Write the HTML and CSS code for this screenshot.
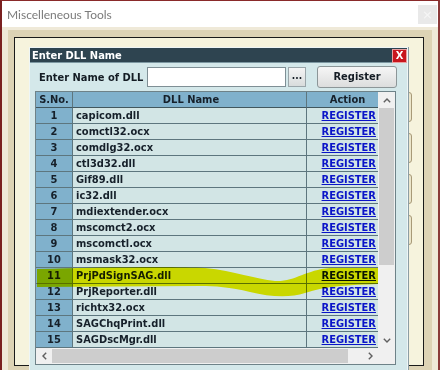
FILE: index.html
```html
<!DOCTYPE html>
<html>
<head>
<meta charset="utf-8">
<link rel="stylesheet" href="styles.css">
</head>
<body>
<div class="window">
  <div class="titlebar">
    <span class="title">Miscelleneous Tools</span>
    <span class="winclose">×</span>
  </div>
  <div class="client">
    <div class="panel">
      <div class="form">
        <div class="sidebtns">
          <div class="sidebtn"></div>
          <div class="sidebtn"></div>
          <div class="sidebtn"></div>
          <div class="sidebtn"></div>
        </div>
      </div>
    </div>
  </div>

  <div class="dialog">
    <div class="dlg-title">
      <span>Enter DLL Name</span>
      <span class="dlg-close">X</span>
    </div>
    <div class="dlg-body">
      <div class="inputrow">
        <span class="label">Enter Name of DLL</span>
        <span class="textbox"></span>
        <span class="browse">...</span>
        <span class="regbtn">Register</span>
      </div>
      <div class="gridbox">
        <div class="gridmain">
          <div class="table">
            <div class="row head"><span class="c sno">S.No.</span><span class="c name">DLL Name</span><span class="c act">Action</span></div>
            <div class="row"><span class="c sno">1</span><span class="c name">capicom.dll</span><span class="c act"><a>REGISTER</a></span></div>
            <div class="row"><span class="c sno">2</span><span class="c name">comctl32.ocx</span><span class="c act"><a>REGISTER</a></span></div>
            <div class="row"><span class="c sno">3</span><span class="c name">comdlg32.ocx</span><span class="c act"><a>REGISTER</a></span></div>
            <div class="row"><span class="c sno">4</span><span class="c name">ctl3d32.dll</span><span class="c act"><a>REGISTER</a></span></div>
            <div class="row"><span class="c sno">5</span><span class="c name">Gif89.dll</span><span class="c act"><a>REGISTER</a></span></div>
            <div class="row"><span class="c sno">6</span><span class="c name">ic32.dll</span><span class="c act"><a>REGISTER</a></span></div>
            <div class="row"><span class="c sno">7</span><span class="c name">mdiextender.ocx</span><span class="c act"><a>REGISTER</a></span></div>
            <div class="row"><span class="c sno">8</span><span class="c name">mscomct2.ocx</span><span class="c act"><a>REGISTER</a></span></div>
            <div class="row"><span class="c sno">9</span><span class="c name">mscomctl.ocx</span><span class="c act"><a>REGISTER</a></span></div>
            <div class="row"><span class="c sno">10</span><span class="c name">msmask32.ocx</span><span class="c act"><a>REGISTER</a></span></div>
            <div class="row"><span class="c sno">11</span><span class="c name">PrjPdSignSAG.dll</span><span class="c act"><a>REGISTER</a></span></div>
            <div class="row"><span class="c sno">12</span><span class="c name">PrjReporter.dll</span><span class="c act"><a>REGISTER</a></span></div>
            <div class="row"><span class="c sno">13</span><span class="c name">richtx32.ocx</span><span class="c act"><a>REGISTER</a></span></div>
            <div class="row"><span class="c sno">14</span><span class="c name">SAGChqPrint.dll</span><span class="c act"><a>REGISTER</a></span></div>
            <div class="row"><span class="c sno">15</span><span class="c name">SAGDscMgr.dll</span><span class="c act"><a>REGISTER</a></span></div>
          </div>
          <div class="vscroll">
            <span class="arrow"><svg width="8" height="5" viewBox="0 0 8 5"><polyline points="0.8,4.2 4,1 7.2,4.2" fill="none" stroke="#606060" stroke-width="1.4"/></svg></span>
            <span class="vthumb"></span>
            <span class="vtrack"></span>
            <span class="arrow"><svg width="8" height="5" viewBox="0 0 8 5"><polyline points="0.8,0.8 4,4 7.2,0.8" fill="none" stroke="#606060" stroke-width="1.4"/></svg></span>
          </div>
        </div>
        <div class="hscroll">
          <span class="harrow"><svg width="5" height="8" viewBox="0 0 5 8"><polyline points="4.2,0.8 1,4 4.2,7.2" fill="none" stroke="#606060" stroke-width="1.4"/></svg></span>
          <span class="hthumb"></span>
          <span class="htrack"></span>
          <span class="harrow"><svg width="5" height="8" viewBox="0 0 5 8"><polyline points="0.8,0.8 4,4 0.8,7.2" fill="none" stroke="#606060" stroke-width="1.4"/></svg></span>
          <span class="corner"></span>
        </div>
      </div>
    </div>
  </div>

  <svg class="marker" width="440" height="370" viewBox="0 0 440 370">
    <path d="M37,269 C100,267 180,266 205,268 C235,271 255,279 275,281 C295,282 305,270 330,268 L378,268 L378,284 C350,285 325,286 305,293 C290,298 270,297 250,292 C230,287 215,286 200,286 L37,287 Z" fill="#f4f000"/>
  </svg>
</div>
</body>
</html>
```

FILE: styles.css
```css
* { box-sizing: border-box; }

html, body {
  margin: 0;
  padding: 0;
  background: #efe9d8;
}

.window {
  position: relative;
  width: 440px;
  height: 370px;
  overflow: hidden;
  background: #efe9d8;
  border-top: 1px solid #8a2a2a;
  border-left: 2px solid #7a2020;
  border-right: 2px solid #8a3a3a;
}

.titlebar {
  height: 26px;
  background: #ffffff;
  display: flex;
  align-items: center;
  justify-content: space-between;
  padding: 0 1px 0 5px;
}

.title {
  font-family: Lato, "Liberation Sans", sans-serif;
  font-size: 12px;
  color: #7b7b7b;
  padding-top: 1px;
}

.winclose {
  width: 19px;
  height: 19px;
  background: #e9e9e9;
  color: #f6f6f6;
  font-family: "DejaVu Sans", sans-serif;
  font-size: 13px;
  line-height: 19px;
  text-align: center;
}

.client {
  padding: 3px 6px 0 6px;
  height: 343px;
}

.panel {
  background: #ddd3b5;
  height: 100%;
  padding: 7px 8px 0 6px;
}

.form {
  height: 329px;
  border: 1px solid #1a1a1a;
  background: #f6f3dd;
  display: flex;
  justify-content: flex-end;
  padding: 54px 11px 0 0;
}

.sidebtns {
  display: flex;
  flex-direction: column;
  gap: 11px;
}

.sidebtn {
  width: 60px;
  height: 30px;
  border: 1px solid #a89a78;
  border-radius: 3px;
  background: #ece6cb;
}

/* Dialog window (floats over the form) */
.dialog {
  position: absolute;
  left: 27px;
  top: 46px;
  width: 379px;
  height: 330px;
  background: #d4e8ea;
  border: 1px solid #eef5f6;
  box-shadow: 1px 0 0 #8c9ea4;
  font-family: "DejaVu Sans Condensed", "DejaVu Sans", sans-serif;
  font-weight: bold;
}

.dlg-title {
  height: 15px;
  background: #2e4450;
  border-bottom: 1px solid #7d98a2;
  color: #ffffff;
  font-size: 11px;
  display: flex;
  align-items: center;
  justify-content: space-between;
  padding-left: 2px;
}

.dlg-close {
  width: 15px;
  height: 14px;
  background: #c8161e;
  border: 1px solid #e9a0a0;
  color: #ffffff;
  font-size: 11px;
  line-height: 12px;
  text-align: center;
  margin-top: 1px;
}

.dlg-body {
  padding: 3px 0 0 5px;
}

.inputrow {
  display: flex;
  align-items: center;
  height: 22px;
  padding-left: 4px;
  font-size: 11px;
  color: #141c24;
}

.label {
  width: 108px;
}

.textbox {
  width: 139px;
  height: 20px;
  background: #ffffff;
  border: 1px solid #7f8f95;
}

.browse {
  width: 18px;
  height: 20px;
  margin-left: 2px;
  border: 1px solid #9aa6aa;
  background: linear-gradient(#f4f4f4, #d8dcdc);
  text-align: center;
  line-height: 16px;
  font-size: 10px;
}

.regbtn {
  width: 80px;
  height: 22px;
  margin-left: 11px;
  border: 1px solid #8c9698;
  border-radius: 3px;
  background: linear-gradient(#f6f6f6, #dcdddd);
  text-align: center;
  line-height: 20px;
}

.gridbox {
  margin-top: 3px;
  width: 361px;
  border: 1px solid #6e8288;
  background: #f0f0f0;
}

.gridmain {
  display: flex;
}

.table {
  width: 342px;
}

.row {
  display: grid;
  grid-template-columns: 37px 234px 71px;
  height: 16px;
  font-size: 11px;
  line-height: 15px;
  color: #16202a;
}

.c {
  border-bottom: 1px solid #5d767e;
  white-space: nowrap;
  overflow: hidden;
}

.sno {
  background: #80b1cc;
  border-right: 1px solid #5d767e;
  text-align: center;
}

.name {
  background: #d2e5e5;
  border-right: 1px solid #5d767e;
  padding-left: 3px;
}

.act {
  background: #d2e5e5;
  text-align: right;
  padding-right: 2px;
}

.head .c {
  background: #80b1cc;
  text-align: center;
  border-bottom-color: #41575e;
}

.head .act {
  padding-left: 12px;
}

.act a {
  color: #0a14c8;
  text-decoration: underline;
  text-underline-offset: 1px;
}

.vscroll {
  width: 17px;
  display: flex;
  flex-direction: column;
  background: #f0f0f0;
}

.arrow {
  height: 16px;
  display: flex;
  align-items: center;
  justify-content: center;
}

.vthumb {
  height: 157px;
  margin: 0 1px;
  background: #cdcdcd;
}

.vtrack {
  flex: 1;
}

.hscroll {
  display: flex;
  height: 16px;
  background: #f0f0f0;
}

.harrow {
  width: 16px;
  display: flex;
  align-items: center;
  justify-content: center;
}

.hthumb {
  width: 296px;
  margin: 1px 0;
  background: #cdcdcd;
}

.htrack {
  width: 14px;
}

.corner {
  width: 17px;
}

.marker {
  position: absolute;
  left: -2px;
  top: -1px;
  pointer-events: none;
  mix-blend-mode: multiply;
}
```
